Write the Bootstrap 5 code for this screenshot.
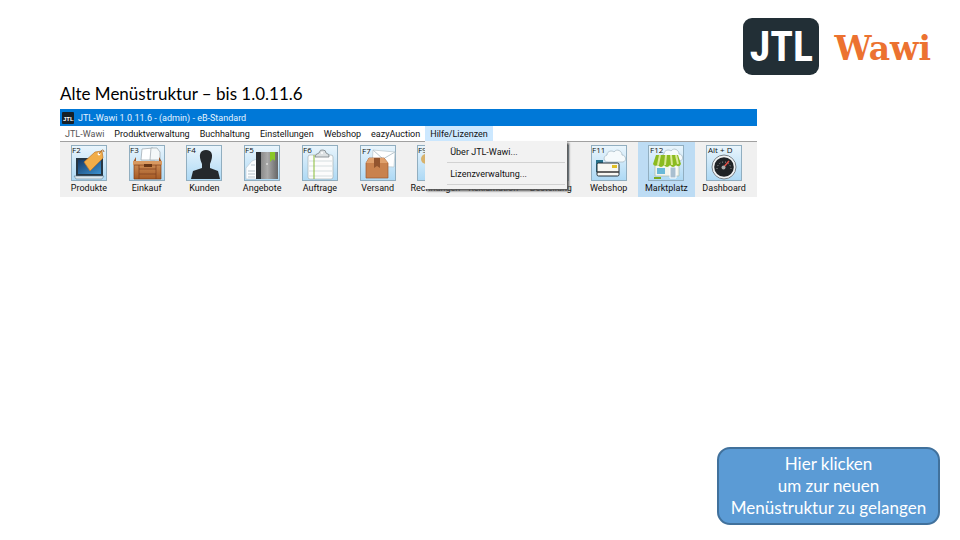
<!DOCTYPE html>
<html lang="de">
<head>
<meta charset="utf-8">
<meta name="viewport" content="width=device-width, initial-scale=1">
<title>JTL-Wawi – Alte Menüstruktur</title>
<link href="https://cdn.jsdelivr.net/npm/bootstrap@5.3.0/dist/css/bootstrap.min.css" rel="stylesheet">
<style>
body{font-family:Lato,"Open Sans",sans-serif;background:#fff;color:#000}
.brand{padding:18px 29px 0 0;gap:15px;height:76px}
.brand-mark{width:76px;height:57px;border-radius:9px;background:#222f36;color:#fff;font:bold 42px/58px "Liberation Sans Narrow","Roboto Condensed","Liberation Sans",sans-serif}
.brand-name{color:#ec7230;font:bold 33px/62px "DejaVu Serif",serif}
.headline{font-size:17px;line-height:20px;margin:8px 0 5px}
.stage{padding:0 203px 0 60px}
.app{font-family:Roboto,"Open Sans",sans-serif;font-size:9px;line-height:12px}
.titlebar{background:#0078d7;color:#e4f3ff;height:17px;padding-left:2px;gap:4px}
.menubar{height:16px;border-bottom:1px solid #a0a0a0;background:#fff}
.menubar button,.tool,.popup button{font:inherit;color:#111;border:0;background:none}
.menubar button{padding:0 5px;height:15px;white-space:nowrap}
.menubar .inactive{color:#555}
.menubar .open{background:#cce8ff}
.popup{top:15px;left:0;width:142px;height:48px;padding:2px 2px 0 22px;background:#f2f2f2;box-shadow:2px 2px 2px #555;z-index:5}
.menubar .popup button{display:block;width:100%;height:18px;padding:0 3px;text-align:left}
.popup hr{margin:1px 0 2px;opacity:1;border-color:#d2d2d2}
.tools{display:grid;grid-template-columns:repeat(12,minmax(0,1fr));background:#f0f0f0;height:55px;padding-right:4px}
.tool{padding:3px 0 0;display:flex;flex-direction:column;align-items:center;gap:1px;white-space:nowrap}
.tool svg{width:36px;height:36px;flex:none}
.tool.active{background:#bddcf4}
.key{font:8px "Open Sans",sans-serif;fill:#111}
.next{margin:0 20px 15px 0;padding:4px 9px;min-width:223px;border:2px solid #41719c;border-radius:13px;background:#5b9bd5;color:#fff;font-size:17px;line-height:22px}
.next:hover{background:#4f90cb;color:#fff}
</style>
</head>
<body>
<svg width="0" height="0" class="position-absolute" aria-hidden="true">
<defs>
<linearGradient id="tile" x2="0" y2="1"><stop stop-color="#eaf5fc"/><stop offset="1" stop-color="#add9f5"/></linearGradient>
<linearGradient id="wood" x2="0" y2="1"><stop stop-color="#c98750"/><stop offset="1" stop-color="#a55a24"/></linearGradient>
<linearGradient id="screen" x2="1" y2="1"><stop stop-color="#163a66"/><stop offset="1" stop-color="#3b91d0"/></linearGradient>
<linearGradient id="cover" x2="1"><stop stop-color="#777"/><stop offset=".5" stop-color="#aaa"/><stop offset="1" stop-color="#666"/></linearGradient>
<g id="tilebox"><rect x=".5" y=".5" width="35" height="35" fill="url(#tile)" stroke="#91aec0"/></g>
<path id="cloud" d="M16 18c-5 0-5-6-1-7 0-4 5-5 7-3 3-4 8-1 8 3 4 0 5 6 1 7Z" fill="#f5fafc" stroke="#a9bbc5" stroke-width=".8"/>
</defs>
</svg>
<div class="min-vh-100 d-flex flex-column">
<header class="brand d-flex justify-content-end">
<div class="brand-mark text-center">JTL</div>
<div class="brand-name">Wawi</div>
</header>
<main class="stage">
<h1 class="headline fw-normal">Alte Menüstruktur – bis 1.0.11.6</h1>
<section class="app" aria-label="JTL-Wawi">
<div class="titlebar d-flex align-items-center">
<svg width="12" height="12" viewBox="0 0 12 12" aria-hidden="true"><rect width="12" height="12" rx="1" fill="#172027"/><text x="1" y="9" font-family="Liberation Sans Narrow,Liberation Sans" font-size="6" font-weight="bold" fill="#fff">JTL</text></svg>
<span>JTL-Wawi 1.0.11.6 - (admin) - eB-Standard</span>
</div>
<nav class="menubar d-flex" aria-label="Hauptmenü">
<button type="button" class="inactive">JTL-Wawi</button>
<button type="button">Produktverwaltung</button>
<button type="button">Buchhaltung</button>
<button type="button">Einstellungen</button>
<button type="button">Webshop</button>
<button type="button">eazyAuction</button>
<div class="position-relative">
<button type="button" class="open" aria-expanded="true">Hilfe/Lizenzen</button>
<div class="popup position-absolute">
<button type="button">Über JTL-Wawi...</button><hr>
<button type="button">Lizenzverwaltung...</button><hr>
</div>
</div>
</nav>
<div class="tools">
<button type="button" class="tool"><svg viewBox="0 0 36 36"><use href="#tilebox"/><path d="M5 13h27v18H5Z" fill="#263744"/><path d="M7 15h23v14H7Z" fill="url(#screen)"/><path d="M3 31h30l-2 3H5Z" fill="#dce8ef" stroke="#668294" stroke-width=".6"/><path d="m13 17 11-10 7-1 1 7-13 13Z" fill="#f1ad48" stroke="#bd7629" stroke-width=".7"/><circle cx="28" cy="9" r="1.4" fill="#fff"/><path d="M28 9q4-7 5-2" fill="none" stroke="#a96d31"/><text class="key" x="1" y="8">F2</text></svg>Produkte</button>
<button type="button" class="tool"><svg viewBox="0 0 36 36"><use href="#tilebox"/><path d="m12 15 1-11 11-1 2 12Z" fill="#fff" stroke="#99a4aa" stroke-width=".7"/><path d="m21 15 1-12h6l3 4v8Z" fill="#f3f7f8" stroke="#99a4aa" stroke-width=".7"/><path d="m7 12-3 5h29l-3-5v4H7Z" fill="#9c572b"/><path d="M4 16h29v4H4Z" fill="#d89961"/><path d="M5 20h27v14H5Z" fill="url(#wood)" stroke="#854119" stroke-width=".7"/><path d="M10 20v14M27 20v14M10 24h17M10 29h17" stroke="#7d3e1c" stroke-width=".7"/><path d="M15 19h8v3h-8Z" fill="#673515"/><text class="key" x="1" y="8">F3</text></svg>Einkauf</button>
<button type="button" class="tool"><svg viewBox="0 0 36 36"><use href="#tilebox"/><path d="M16 19c-4-9-2-14 4-14s8 5 4 14v4l8 3 2 8H5l2-8 9-3Z" fill="#25292c"/><text class="key" x="1" y="8">F4</text></svg>Kunden</button>
<button type="button" class="tool"><svg viewBox="0 0 36 36"><use href="#tilebox"/><path d="m2 23 6-7 5-2v20H2Z" fill="#fafdff" stroke="#bac5cc" stroke-width=".6"/><path d="M4 26h7M4 29h7M4 32h7M7 20h4" stroke="#9aabb5" stroke-width=".7"/><path d="M13 7h21v27H13Z" fill="url(#cover)"/><path d="M12 7h5v27h-5Z" fill="#292d31"/><path d="M26 7h5v9l-2-2-3 3Z" fill="#8bc729"/><circle cx="23" cy="19" r=".8" fill="#fff"/><text class="key" x="1" y="8">F5</text></svg>Angebote</button>
<button type="button" class="tool"><svg viewBox="0 0 36 36"><use href="#tilebox"/><rect x="6" y="10" width="25" height="24" rx="2" fill="#fcfcfc" stroke="#a8b2b6" stroke-width=".7"/><path d="M7 16h23M7 21h23M7 26h23M7 31h23" stroke="#c6d1d4" stroke-width=".7"/><path d="M12 10v24" stroke="#87bd34"/><path d="M13 12q0-3 4-4 1-4 4-3 3 0 3 3 4 1 3 4Z" fill="#dce0e2" stroke="#788187" stroke-width=".8"/><circle cx="20" cy="8" r="1" fill="#fff"/><text class="key" x="1" y="8">F6</text></svg>Auftrage</button>
<button type="button" class="tool"><svg viewBox="0 0 36 36"><use href="#tilebox"/><path d="m13 5 22 2-1 15-22-1Z" fill="#fff" stroke="#b9c6cb" stroke-width=".7"/><path d="m13 5 10 9L35 7" fill="none" stroke="#bbc8cf"/><path d="m6 18 3-5h15l4 5v15H6Z" fill="#c9824e" stroke="#9b5a32" stroke-width=".7"/><path d="m6 18 3-5h15l4 5Z" fill="#e0a16d"/><path d="M14 13h6v10l-3-2-3 2Z" fill="#93552f"/><text class="key" x="2" y="9">F7</text></svg>Versand</button>
<button type="button" class="tool"><svg viewBox="0 0 36 36"><use href="#tilebox"/><circle cx="9" cy="14" r="5" fill="#d8b26b"/><path d="M10 20h20v14H10Z" fill="#f8f8f8"/><text class="key" x="1" y="8">F9</text></svg>Rechnungen</button>
<button type="button" class="tool"><svg viewBox="0 0 36 36"><use href="#tilebox"/></svg>Reklamation</button>
<button type="button" class="tool"><svg viewBox="0 0 36 36"><use href="#tilebox"/></svg>Bestellung</button>
<button type="button" class="tool"><svg viewBox="0 0 36 36"><use href="#tilebox"/><use href="#cloud" x="1" y="-1"/><path d="M5 15h7v4H9v8H5Z" fill="#26718a"/><rect x="6" y="18" width="22" height="13" rx="1.5" fill="#f8f8f3" stroke="#26333a"/><path d="M6 27h22" stroke="#333" stroke-width="1.5"/><rect x="21" y="20" width="5" height="3" fill="#e0bf25"/><text class="key" x="1" y="8">F11</text></svg>Webshop</button>
<button type="button" class="tool active"><svg viewBox="0 0 36 36"><use href="#tilebox"/><use href="#cloud" x="1" y="-2"/><path d="M7 20h24v11H7Z" fill="#f3f5ee" stroke="#a7b9ae" stroke-width=".7"/><path d="M9 23h8v6H9Z" fill="#69b9d8"/><path d="M22 22h6v11h-6Z" fill="#a9bfd0" stroke="#fff"/><path d="M8 10h22l3 9q-2 4-5 1-3 4-6 0-3 4-6 0-3 4-6 0-4 2-5-1Z" fill="#8bbb20"/><path d="m12 10-2 10M18 10l-1 10M23 10l1 10M28 10l2 9" stroke="#dce996" stroke-width="2"/><path d="M6 32h7v2H6Z" fill="#7aaa20"/><text class="key" x="2" y="8">F12</text></svg>Marktplatz</button>
<button type="button" class="tool"><svg viewBox="0 0 36 36"><use href="#tilebox"/><circle cx="18" cy="22" r="12" fill="#f2f4f5" stroke="#788188"/><circle cx="18" cy="22" r="9.8" fill="#202326"/><path d="M11 24a7 7 0 1 1 14 0" fill="none" stroke="#aaa" stroke-dasharray="1 2"/><path d="m17 23 6-7" stroke="#e54f45" stroke-width="1.5"/><circle cx="17.5" cy="22.5" r="2" fill="#aaa"/><text class="key" x="2" y="8">Alt + D</text></svg>Dashboard</button>
</div>
</section>
</main>
<button type="button" class="next btn align-self-end mt-auto">Hier klicken<br>um zur neuen<br>Menüstruktur zu gelangen</button>
</div>
<script src="https://cdn.jsdelivr.net/npm/bootstrap@5.3.0/dist/js/bootstrap.bundle.min.js"></script>
</body>
</html>
